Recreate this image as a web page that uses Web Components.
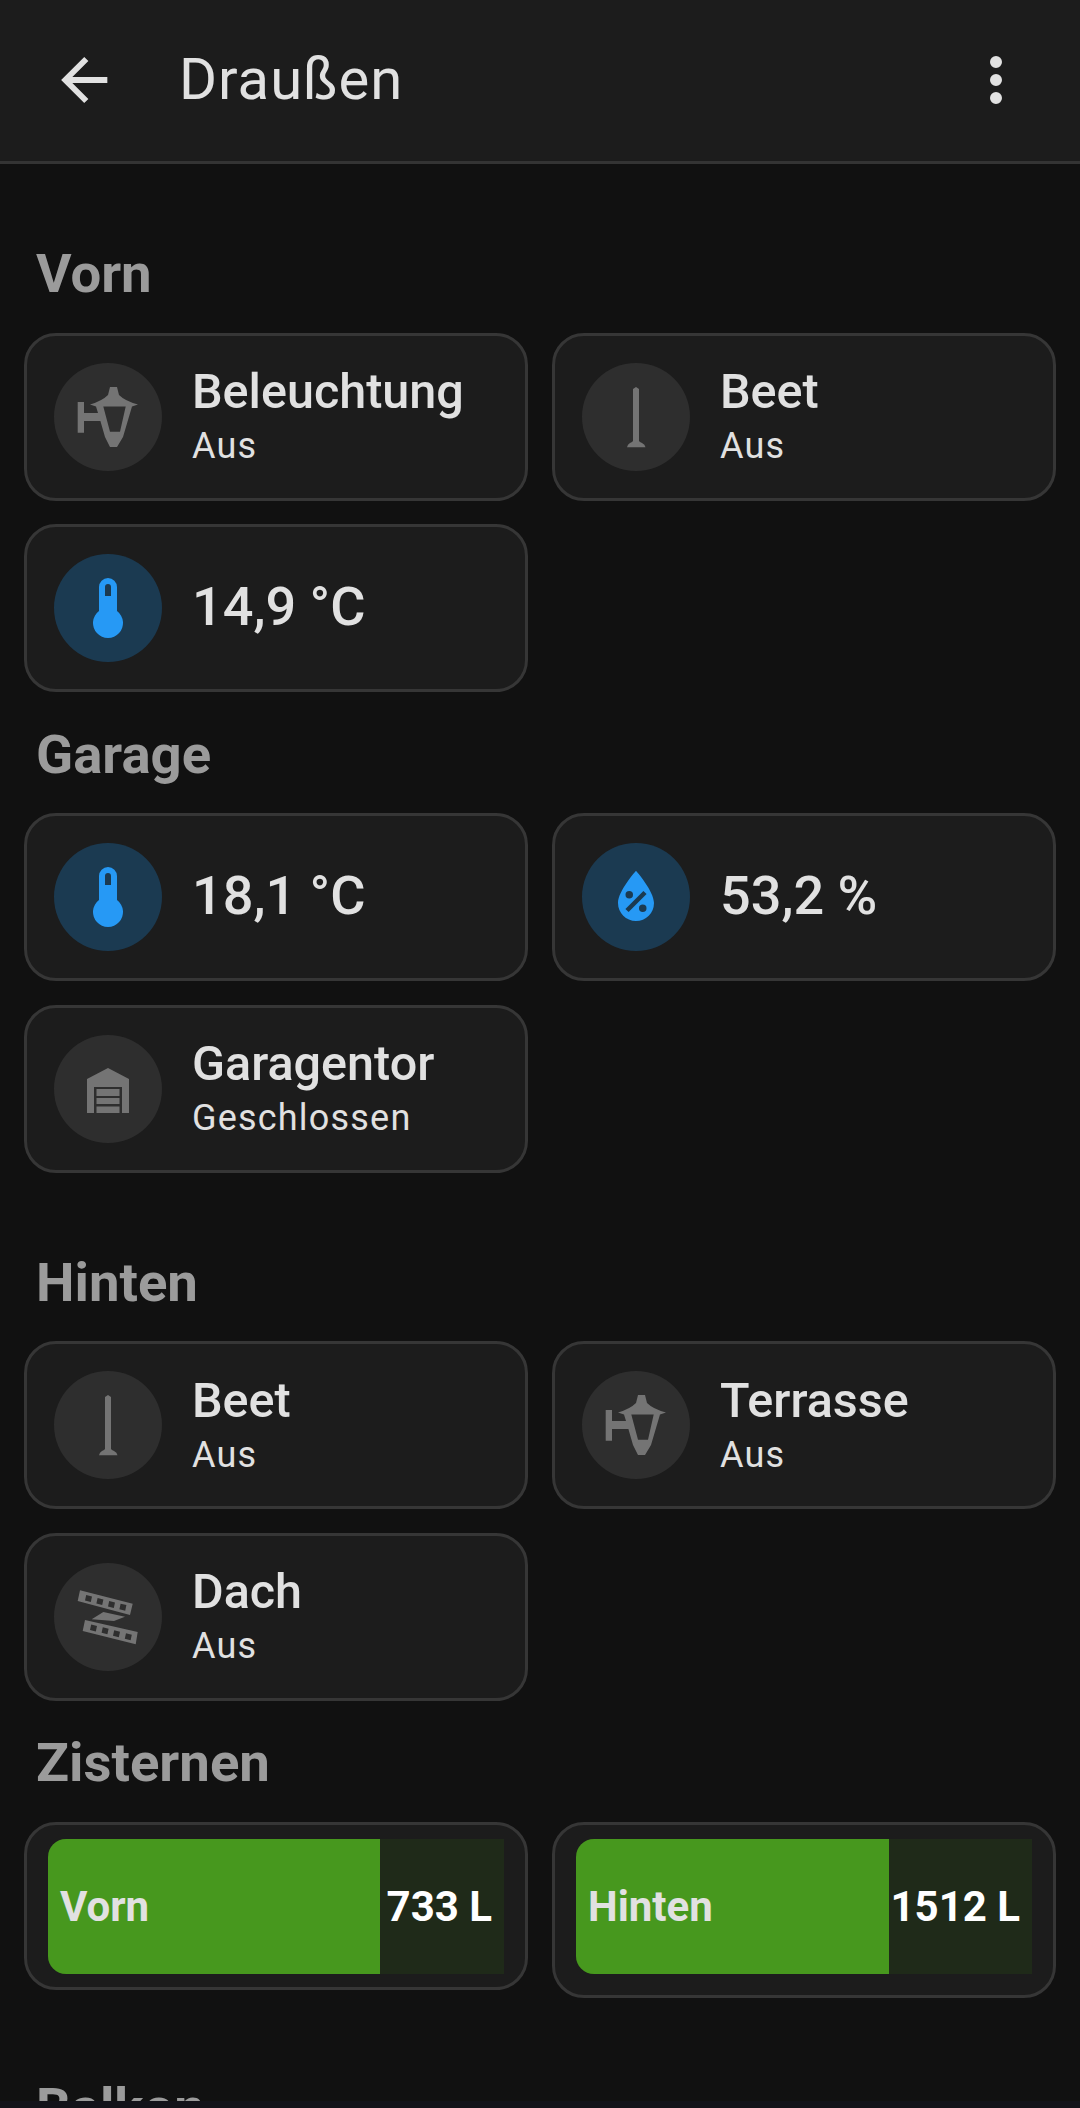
<!DOCTYPE html>
<html lang="de">
<head>
<meta charset="utf-8">
<title>Draußen</title>
<style>
html, body { margin: 0; padding: 0; background: #111111; }
body { font-family: Roboto, "Liberation Sans", sans-serif; }
</style>
</head>
<body>
<app-shell>
    <app-header slot="header">Draußen</app-header>

    <tile-section heading="Vorn" tight>
        <state-tile icon="lantern" name="Beleuchtung" state="Aus"></state-tile>
        <state-tile icon="post" name="Beet" state="Aus"></state-tile>
        <state-tile icon="thermometer" name="14,9 °C" active></state-tile>
    </tile-section>

    <tile-section heading="Garage">
        <state-tile icon="thermometer" name="18,1 °C" active></state-tile>
        <state-tile icon="humidity" name="53,2 %" active></state-tile>
        <state-tile icon="garage" name="Garagentor" state="Geschlossen"></state-tile>
    </tile-section>

    <tile-section heading="Hinten" tight>
        <state-tile icon="post" name="Beet" state="Aus"></state-tile>
        <state-tile icon="lantern" name="Terrasse" state="Aus"></state-tile>
        <state-tile icon="strips" name="Dach" state="Aus"></state-tile>
    </tile-section>

    <tile-section heading="Zisternen">
        <level-tile label="Vorn" value="733 L" percent="72.8"></level-tile>
        <level-tile label="Hinten" value="1512 L" percent="68.6" tall></level-tile>
    </tile-section>

    <tile-section heading="Balkon"></tile-section>
</app-shell>

<script>
const ICONS = {
    back: `<path d="M20 11V13H8L13.5 18.5L12.08 19.92L4.16 12L12.08 4.08L13.5 5.5L8 11H20Z" transform="scale(3)"/>`,
    menu: `<path d="M12,16A2,2 0 0,1 14,18A2,2 0 0,1 12,20A2,2 0 0,1 10,18A2,2 0 0,1 12,16M12,10A2,2 0 0,1 14,12A2,2 0 0,1 12,14A2,2 0 0,1 10,12A2,2 0 0,1 12,10M12,4A2,2 0 0,1 14,6A2,2 0 0,1 12,8A2,2 0 0,1 10,6A2,2 0 0,1 12,4Z" transform="scale(3)"/>`,
    thermometer: `<path d="M15 13V5A3 3 0 0 0 9 5V13A5 5 0 1 0 15 13M12 4A1 1 0 0 1 13 5V8H11V5A1 1 0 0 1 12 4Z" transform="scale(3)"/>`,
    humidity: `<path fill-rule="evenodd" d="M12,3.25C12,3.25 6,10 6,14C6,17.32 8.69,20 12,20A6,6 0 0,0 18,14C18,10 12,3.25 12,3.25M14.47,9.97L15.53,11.03L9.53,17.03L8.47,15.97M9.75,10A1.25,1.25 0 0,1 11,11.25A1.25,1.25 0 0,1 9.75,12.5A1.25,1.25 0 0,1 8.5,11.25A1.25,1.25 0 0,1 9.75,10M14.25,14.5A1.25,1.25 0 0,1 15.5,15.75A1.25,1.25 0 0,1 14.25,17A1.25,1.25 0 0,1 13,15.75A1.25,1.25 0 0,1 14.25,14.5Z" transform="scale(3)"/>`,
    lantern: `<path fill-rule="evenodd" d="M5.7 21H12V32H26L24 25.500L18 23.500Q30 20 36 14L38 6H45L47 14Q53 20 66 23.500L60 25.500L51 56L45 66H38L33 56L28.400 40H12V51.700H5.700ZM31.300 25.500L38 50.700H48L53.700 25.500Z"/>`,
    post: `<path d="M36 6L39 8V60Q39.500 61 42 62Q45 63.500 45.500 66.300H27Q27.500 63.500 30 62Q32.500 61 33 60V8Z"/>`,
    garage: `<path fill-rule="evenodd" d="M36 15L57 26V60H50V34H22V60H15V26Z"/><path d="M24.500 36H47.500V43H24.500ZM24.500 45H47.500V51H24.500ZM24.500 53.500H47.500V60H24.500Z"/>`,
    strips: `<path fill-rule="evenodd" d="M8 9.300L60.700 22.700L58 34L5.700 20ZM14.200 14L13 19.500L18.800 21L20 15.400ZM25.600 17L24.400 22.400L30.200 23.900L31.400 18.400ZM37.200 20L36 25.400L41.800 26.900L43 21.400ZM48.600 22.700L47.400 28.200L53.200 29.700L54.400 24.100Z"/><path d="M31.300 31L53 35.700L42 40L19.700 38.300Z"/><path fill-rule="evenodd" d="M13 39L65.700 51L63.700 63.300L10.700 50ZM19.200 43.600L18 49.100L23.800 50.600L25 45ZM30.800 46.300L29.600 51.800L35.400 53.300L36.600 47.700ZM42.200 49.300L41 54.800L46.800 56.300L48 50.700ZM54 52.300L52.800 57.800L58.600 59.300L59.800 53.700Z"/>`,
};

customElements.define('app-icon', class extends HTMLElement {
    connectedCallback() {
        this.attachShadow({mode: 'open'}).innerHTML = `
<style>
:host {
    display: block;
    width: 72px;
    height: 72px;
    flex: none;
}
svg {
    display: block;
    width: 100%;
    height: 100%;
    fill: currentColor;
}
</style>
<svg viewBox="0 0 72 72">${ICONS[this.getAttribute("name")]}</svg>
        `;
    }
});

customElements.define('app-shell', class extends HTMLElement {
    constructor() {
        super();
        this.attachShadow({mode: 'open'}).innerHTML = `
<style>
:host {
    display: flex;
    flex-direction: column;
    height: 2108px;
    overflow: hidden;
    background: #111111;
}
.view {
    flex: 1 1 0;
    min-height: 0;
    overflow: hidden;
    padding-top: 47.5px;
}
.nav-bar {
    flex: 0 0 7px;
    background: #13131a;
}
</style>
<slot name="header"></slot>
<div class="view"><slot></slot></div>
<div class="nav-bar"></div>
        `;
    }
});

customElements.define('app-header', class extends HTMLElement {
    constructor() {
        super();
        this.attachShadow({mode: 'open'}).innerHTML = `
<style>
:host {
    display: flex;
    align-items: center;
    flex: none;
    box-sizing: border-box;
    height: 164px;
    padding: 0 48px 2px 49px;
    background: #1c1c1c;
    border-bottom: 3px solid #343434;
    color: #e1e1e1;
}
.back {
    width: 70px;
    height: 70px;
}
.title {
    flex: 1;
    margin: 0 0 2px 60px;
    font-size: 58px;
    font-weight: 400;
    letter-spacing: 1px;
}
</style>
<app-icon class="back" name="back"></app-icon>
<span class="title"><slot></slot></span>
<app-icon name="menu"></app-icon>
        `;
    }
});

customElements.define('tile-section', class extends HTMLElement {
    constructor() {
        super();
        this.attachShadow({mode: 'open'}).innerHTML = `
<style>
:host {
    display: block;
    margin-bottom: 47.500px;
}
:host([tight]) {
    margin-bottom: 0;
}
h2 {
    margin: 0;
    box-sizing: border-box;
    height: 121px;
    padding: 31.500px 36px 0;
    font-size: 54.500px;
    line-height: 60px;
    font-weight: 700;
    color: #9b9b9b;
}
.grid {
    display: grid;
    grid-template-columns: 1fr 1fr;
    align-items: start;
    gap: 23.600px 24px;
    padding: 0 24px;
}
</style>
<h2></h2>
<div class="grid"><slot></slot></div>
        `;
        this.shadowRoot.querySelector("h2").textContent = this.getAttribute("heading");
    }
});

customElements.define('state-tile', class extends HTMLElement {
    connectedCallback() {
        const state = this.getAttribute("state");
        this.attachShadow({mode: 'open'}).innerHTML = `
<style>
:host {
    display: flex;
    align-items: center;
    box-sizing: border-box;
    height: 168px;
    padding: 0 27px;
    background: #1c1c1c;
    border: 3px solid #363636;
    border-radius: 32px;
    color: #e1e1e1;
}
.badge {
    display: flex;
    align-items: center;
    justify-content: center;
    flex: none;
    width: 108px;
    height: 108px;
    border-radius: 50%;
    background: #2e2e2e;
    color: #747474;
}
:host([active]) .badge {
    background: #1b3a51;
    color: #2699f5;
}
.info {
    display: flex;
    flex-direction: column;
    margin-left: 30px;
    min-width: 0;
}
.name {
    font-size: 48.500px;
    line-height: 54px;
    font-weight: 500;
}
.state {
    margin-top: 5px;
    font-size: 36px;
    line-height: 44px;
    letter-spacing: 1.200px;
    font-weight: 400;
}
:host([active]) .name {
    font-size: 54px;
    margin-bottom: 3px;
}
</style>
<div class="badge"><app-icon name="${this.getAttribute("icon")}"></app-icon></div>
<div class="info">
    <span class="name">${this.getAttribute("name")}</span>
    ${state ? `<span class="state">${state}</span>` : ""}
</div>
        `;
    }
});

customElements.define('level-tile', class extends HTMLElement {
    connectedCallback() {
        this.attachShadow({mode: 'open'}).innerHTML = `
<style>
:host {
    display: block;
    box-sizing: border-box;
    height: 168px;
    padding: 14.500px 21px;
    background: #1c1c1c;
    border: 3px solid #363636;
    border-radius: 32px;
}
:host([tall]) {
    height: 176px;
}
.track {
    position: relative;
    display: flex;
    align-items: center;
    justify-content: space-between;
    height: 135px;
    padding: 0 12px;
    box-sizing: border-box;
    overflow: hidden;
    border-radius: 18px 0 0 18px;
    background: #1f2a19;
    font-size: 42px;
    font-weight: 700;
}
.fill {
    position: absolute;
    inset: 0 auto 0 0;
    width: ${this.getAttribute("percent")}%;
    background: #47981e;
}
.label {
    position: relative;
    color: #e1e1e1;
}
.value {
    position: relative;
    color: #ffffff;
}
</style>
<div class="track">
    <div class="fill"></div>
    <span class="label">${this.getAttribute("label")}</span>
    <span class="value">${this.getAttribute("value")}</span>
</div>
        `;
    }
});
</script>
</body>
</html>
